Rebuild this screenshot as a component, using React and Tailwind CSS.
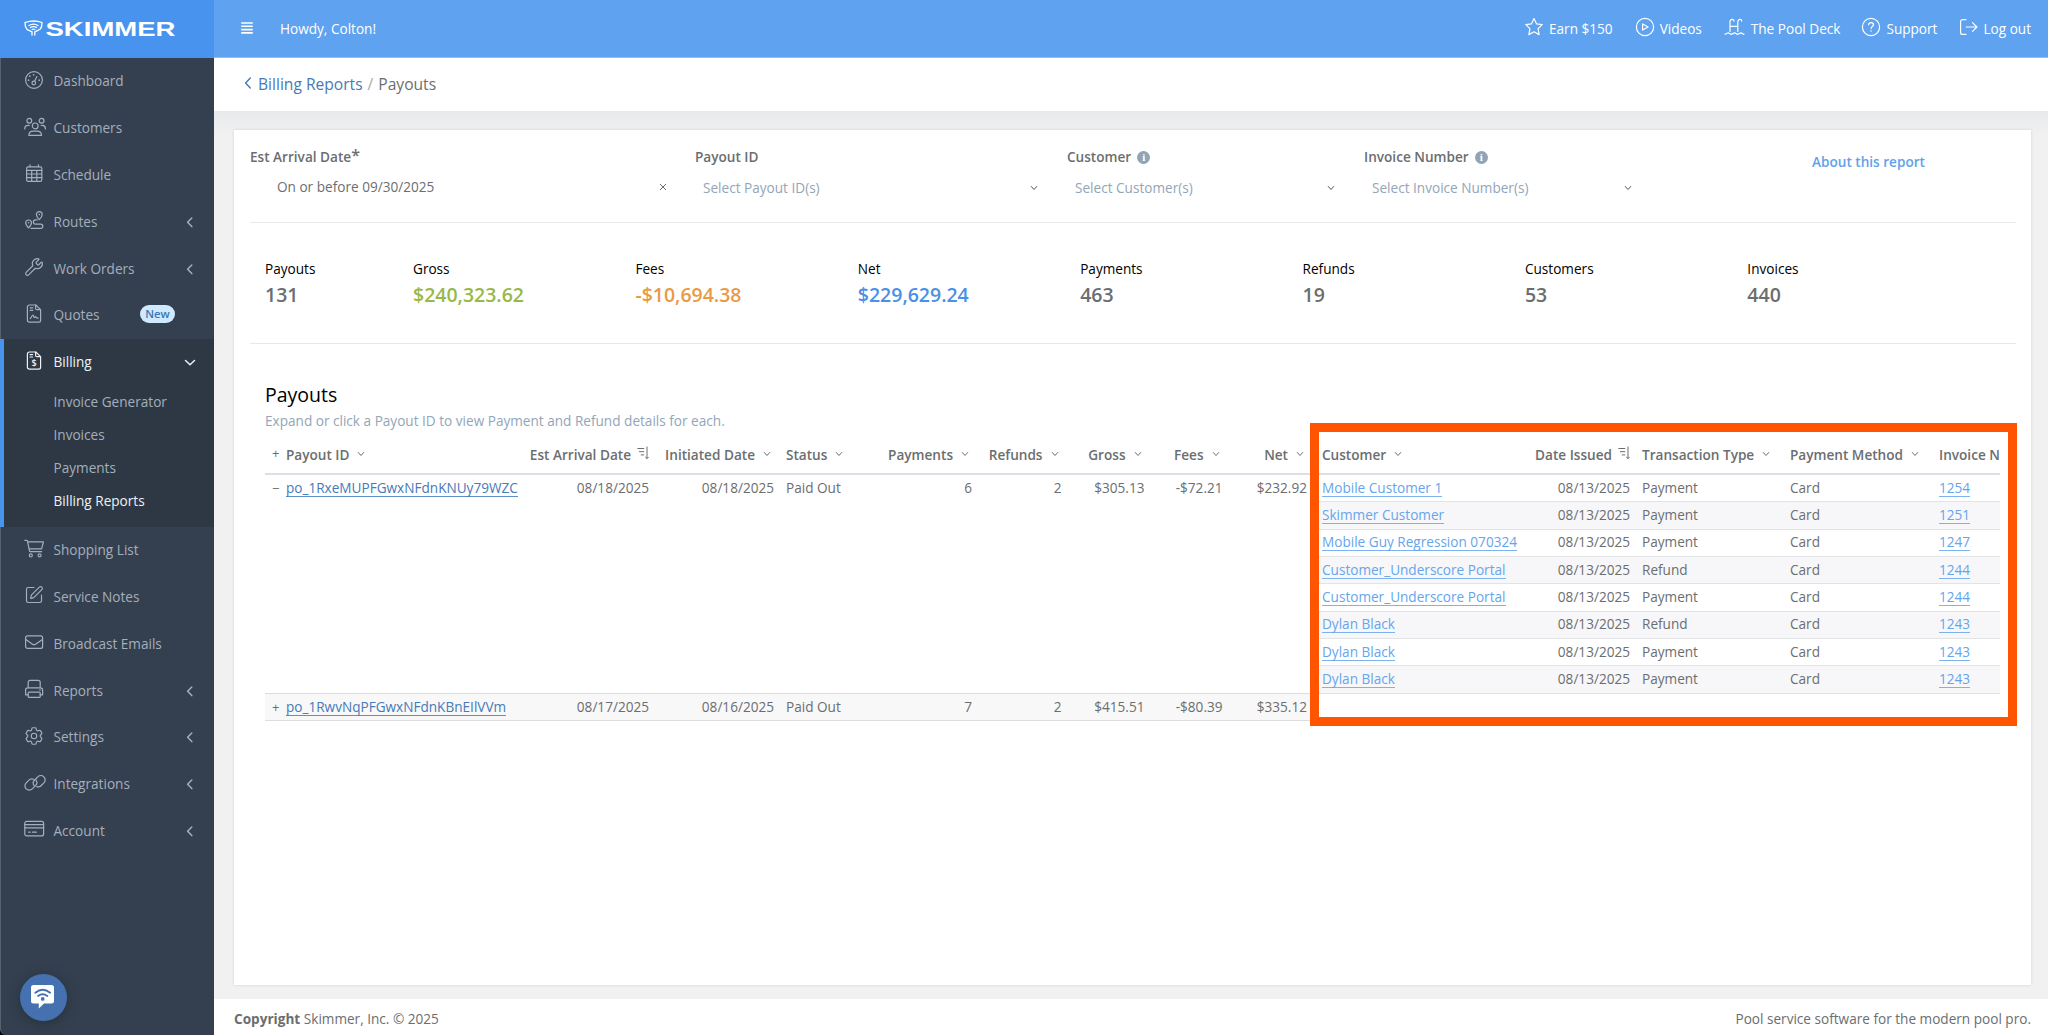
import clsx from 'clsx'
import { Wrench, SquarePen } from 'lucide-react'
import { HiOutlineCog6Tooth } from 'react-icons/hi2'

function Icon({ children, w = 22, h = 20, sw = 1.2, className }) {
  return (
    <svg
      width={w}
      height={h}
      viewBox={`0 0 ${w} ${h}`}
      fill="none"
      stroke="currentColor"
      strokeWidth={sw}
      strokeLinecap="round"
      strokeLinejoin="round"
      className={clsx('shrink-0', className)}
    >
      {children}
    </svg>
  )
}

const icons = {
  dashboard: (
    <Icon>
      <circle cx="10" cy="10" r="8.4" />
      <circle cx="9.8" cy="13" r="1.8" />
      <path d="M10.6 11.3l2.3-4.7" />
      <path d="M9.6 4.8v0M5.8 6.2v0M4.6 10.2v0M15.2 10.2v0" strokeWidth="1.7" />
    </Icon>
  ),
  customers: (
    <Icon>
      <circle cx="5.3" cy="3.8" r="2.4" />
      <circle cx="17.6" cy="3.8" r="2.4" />
      <circle cx="11.2" cy="8.9" r="2.9" />
      <path d="M4.9 18.4c0-2.6 1.8-4.3 4.2-4.3h4.2c2.4 0 4.2 1.7 4.2 4.3z" />
      <path d="M.8 12v-.6c0-1.9 1.4-3.1 3.2-3.1h1.2M21.4 12v-.6c0-1.9-1.2-3.1-3-3.1h-1.2" />
    </Icon>
  ),
  schedule: (
    <Icon>
      <rect x="2.6" y="3.9" width="15.2" height="14.4" rx="1.6" />
      <path d="M2.6 7.4h15.2M2.6 11h15.2M2.6 14.6h15.2M7.7 7.4v10.9M12.8 7.4v10.9M6 1.8v2M14.4 1.8v2" />
    </Icon>
  ),
  routes: (
    <Icon>
      <path d="M15.3 9.7c-1.8-2-2.9-3.6-2.9-5.2a2.9 2.9 0 0 1 5.8 0c0 1.6-1.1 3.2-2.9 5.2z" />
      <path d="M4.6 17.8c-1.8-2-2.9-3.4-2.9-4.9a2.9 2.9 0 0 1 5.8 0c0 1.5-1.1 2.9-2.9 4.9z" />
      <path d="M15.3 4.5v0M4.6 12.8v0" strokeWidth="1.6" />
      <path d="M13.2 9.9h-1.7a2.1 2.1 0 0 0 0 4.2h5.2a2.1 2.1 0 0 1 0 4.2H7" />
    </Icon>
  ),
  wrench: <Wrench size={20} strokeWidth={1.4} className="mr-0.5 shrink-0" />,
  quotes: (
    <Icon>
      <path d="M5.3 1h6.5l4.8 4.6v10.6a1.9 1.9 0 0 1-1.9 1.9H5.3a1.9 1.9 0 0 1-1.9-1.9V2.9A1.9 1.9 0 0 1 5.3 1z" />
      <path d="M11.6 1.2v3.2a1.2 1.2 0 0 0 1.2 1.2h3.6M6.2 3.8h2.6M6.2 6.4h2.6" />
      <path d="M6.2 14.6c1.4-1.2 1.8-3.6 2.8-3.6.9 0 .5 2.6 1.3 2.6.6 0 .7-.9 1.2-.9s.6 1.5 2.6 1.4" />
    </Icon>
  ),
  billing: (
    <Icon>
      <path d="M5.3 1h6.5l4.8 4.6v10.6a1.9 1.9 0 0 1-1.9 1.9H5.3a1.9 1.9 0 0 1-1.9-1.9V2.9A1.9 1.9 0 0 1 5.3 1z" />
      <path d="M11.6 1.2v3.2a1.2 1.2 0 0 0 1.2 1.2h3.6M6 3.6h2.6M6 6h2.6" />
      <text x="10.1" y="15.4" textAnchor="middle" fontSize="9" fontWeight="600" fontFamily="Open Sans" fill="currentColor" stroke="none">
        $
      </text>
    </Icon>
  ),
  cart: (
    <Icon>
      <path d="M.8 1.3h1.7c.6 0 .9.3 1 .8l2 9.7c.1.6.5.9 1.1.9h11M3.7 2.9h15.7l-1.8 6.9H5.2" />
      <circle cx="6.8" cy="16.4" r="1.5" />
      <circle cx="15.6" cy="16.4" r="1.5" />
    </Icon>
  ),
  edit: <SquarePen size={20} strokeWidth={1.4} className="mr-0.5 shrink-0" />,
  mail: (
    <Icon>
      <rect x="1.6" y="3.8" width="17" height="12.6" rx="2" />
      <path d="M1.8 7.4l6.7 4.8a2.6 2.6 0 0 0 3.1 0l6.8-4.8" />
    </Icon>
  ),
  printer: (
    <Icon>
      <path d="M4.2 8V3.2A1.9 1.9 0 0 1 6.1 1.3h8.1a2 2 0 0 1 2 2V8" />
      <path d="M4.2 15.8H1.6v-4.9A2.1 2.1 0 0 1 3.7 8.8h12.8a2.1 2.1 0 0 1 2.1 2.1v4.9h-2.5" />
      <rect x="4.2" y="13.1" width="12" height="5.3" rx="1" />
      <path d="M16 11v0" strokeWidth="1.6" />
    </Icon>
  ),
  settings: <HiOutlineCog6Tooth size={22} strokeWidth={1.25} className="-ml-px mr-px shrink-0" />,
  link: (
    <Icon>
      <path d="M9.6 6.2a4.6 4.6 0 0 0-4.9 1.1L2.2 9.8a4.3 4.3 0 0 0 6.1 6.1l3.2-3.2a4.3 4.3 0 0 0 .3-5.8" />
      <path d="M12.6 13.7a4.6 4.6 0 0 0 4.7-1.2l2.6-2.6a4.3 4.3 0 0 0-6.1-6.1l-3.2 3.2a4.3 4.3 0 0 0-.3 5.8" />
    </Icon>
  ),
  card: (
    <Icon>
      <rect x=".8" y="2.3" width="18.8" height="14.6" rx="2" />
      <path d="M.8 5.6h18.8M.8 8.8h18.8M4.6 13.2h1.6M8.4 13.2h4" />
    </Icon>
  ),
}

const topMenu = [
  { label: 'Dashboard', icon: 'dashboard' },
  { label: 'Customers', icon: 'customers' },
  { label: 'Schedule', icon: 'schedule' },
  { label: 'Routes', icon: 'routes', arrow: true },
  { label: 'Work Orders', icon: 'wrench', arrow: true },
  { label: 'Quotes', icon: 'quotes', badge: 'New' },
]

const billingMenu = ['Invoice Generator', 'Invoices', 'Payments', 'Billing Reports']

const bottomMenu = [
  { label: 'Shopping List', icon: 'cart' },
  { label: 'Service Notes', icon: 'edit' },
  { label: 'Broadcast Emails', icon: 'mail' },
  { label: 'Reports', icon: 'printer', arrow: true },
  { label: 'Settings', icon: 'settings', arrow: true },
  { label: 'Integrations', icon: 'link', arrow: true },
  { label: 'Account', icon: 'card', arrow: true },
]

const headerLinks = [
  {
    label: 'Earn $150',
    gap: 'mr-[22px]',
    icon: (
      <Icon w={20} h={20}>
        <path d="M10 1.5l2.5 5.3 5.7.8-4.1 4.1 1 5.9-5.1-2.8-5.1 2.8 1-5.9L1.8 7.6l5.700-.8z" />
      </Icon>
    ),
  },
  {
    label: 'Videos',
    gap: 'mr-[22px]',
    icon: (
      <Icon w={20} h={20}>
        <circle cx="10" cy="10" r="8.6" />
        <path d="M7.6 6.9v6.2l5.5-3.1z" />
      </Icon>
    ),
  },
  {
    label: 'The Pool Deck',
    gap: 'mr-[21px]',
    icon: (
      <Icon w={21} h={20} className="mr-px">
        <path d="M6 14.5V5.2c0-1.7.9-2.8 2.2-2.8 1.1 0 1.7.7 1.8 1.7M13.8 14.5V5.2c0-1.7.9-2.8 2.2-2.8 1.1 0 1.7.7 1.8 1.7M6 9.3h7.8" />
        <path d="M1 17.2c1.7 0 1.9-1.4 3.1-1.4 1.4 0 1.6 1.4 3.2 1.4s1.8-1.4 3.2-1.4 1.6 1.4 3.2 1.4 1.8-1.4 3.2-1.4c1.3 0 1.5 1.4 3.1 1.4" />
      </Icon>
    ),
  },
  {
    label: 'Support',
    gap: 'mr-[21px]',
    icon: (
      <Icon w={20} h={20}>
        <circle cx="10" cy="10" r="8.6" />
        <path d="M7.6 7.7c.1-1.3 1-2.1 2.4-2.1s2.5.8 2.5 2.1c0 1.8-2.4 1.8-2.4 3.7" />
        <path d="M10.1 14v0" strokeWidth="1.6" />
      </Icon>
    ),
  },
  {
    label: 'Log out',
    gap: '',
    icon: (
      <Icon w={20} h={20} className="-mr-px ml-px">
        <path d="M7 2.6H3.6a2 2 0 0 0-2 2v10.8a2 2 0 0 0 2 2H7M7.2 10h10.6M13.5 5.6l4.4 4.400-4.400 4.400" />
      </Icon>
    ),
  },
]

const stats = [
  { label: 'Payouts', value: '131', color: 'text-[#6b6e70]' },
  { label: 'Gross', value: '$240,323.62', color: 'text-[#98b849]' },
  { label: 'Fees', value: '-$10,694.38', color: 'text-[#ea9a45]' },
  { label: 'Net', value: '$229,629.24', color: 'text-[#4a90e8]' },
  { label: 'Payments', value: '463', color: 'text-[#6b6e70]' },
  { label: 'Refunds', value: '19', color: 'text-[#6b6e70]' },
  { label: 'Customers', value: '53', color: 'text-[#6b6e70]' },
  { label: 'Invoices', value: '440', color: 'text-[#6b6e70]' },
]

const details = [
  ['Mobile Customer 1', 'Payment', '1254'],
  ['Skimmer Customer', 'Payment', '1251'],
  ['Mobile Guy Regression 070324', 'Payment', '1247'],
  ['Customer_Underscore Portal', 'Refund', '1244'],
  ['Customer_Underscore Portal', 'Payment', '1244'],
  ['Dylan Black', 'Refund', '1243'],
  ['Dylan Black', 'Payment', '1243'],
  ['Dylan Black', 'Payment', '1243'],
]

const payoutCols = 'grid grid-cols-[257px_133px_125px_102px_96px_89.5px_83px_78px_84.5px]'
const detailCols = 'grid grid-cols-[212px_108px_148px_149px_67px]'

function Chevron({ className }) {
  return (
    <Icon w={8} h={6} sw={1} className={className}>
      <path d="M1.3 1.5L4 4.5l2.7-3" />
    </Icon>
  )
}

function SortIcon() {
  return (
    <Icon w={12} h={14} sw={1} className="ml-[6px] mb-1">
      <path d="M.8 2.5h6M2.4 5.7h4.4M4.2 8.9h2.6M10 1v11.4M8.6 11.2l1.4 1.4 1.4-1.4" />
    </Icon>
  )
}

function Head({ label, right, sorted, plain }) {
  return (
    <div className={clsx('flex items-center px-[6px] whitespace-nowrap font-semibold', right && 'justify-end')}>
      {label}
      {sorted && <SortIcon />}
      {!sorted && !plain && <Chevron className={clsx('ml-2 mb-0.5', right && 'mr-[3px]')} />}
    </div>
  )
}

function InfoDot() {
  return (
    <span className="ml-[6px] flex size-[13px] items-center justify-center rounded-full bg-[#91a4b7] font-['Liberation_Serif',serif] text-[11px] font-bold leading-none text-white">
      i
    </span>
  )
}

function MenuRow({ item, active }) {
  return (
    <div className="flex h-[46.8px] items-center pl-6 pr-[18px]">
      <span className="-mt-[3px]">{icons[item.icon]}</span>
      <span className="ml-[7.5px]">{item.label}</span>
      {item.badge && (
        <span className="-mt-0.5 ml-[40.5px] flex h-[18px] w-[35px] items-center justify-center rounded-full bg-[#cfeafd] text-[11.3px] font-semibold text-[#3f76b5]">
          {item.badge}
        </span>
      )}
      {item.arrow && (
        <Icon w={12} h={12} sw={1.5} className="ml-auto">
          <path d="M7.8 2L3.6 6.3l4.2 4.3" />
        </Icon>
      )}
      {active && (
        <Icon w={12} h={12} sw={1.5} className="ml-auto">
          <path d="M1.5 4.5L6 8.8l4.5-4.3" />
        </Icon>
      )}
    </div>
  )
}

function Sidebar() {
  return (
    <aside className="relative flex w-[214px] shrink-0 flex-col rounded-bl-[6px] border-l border-[#56626f] bg-[#344050] text-[#a4afbb]">
      <div className="-ml-px flex h-[58px] shrink-0 items-center bg-[#4893ed] pl-6">
        <svg width="154" height="20" viewBox="0 0 154 20" fill="none" stroke="#fff" strokeLinecap="round">
          <path d="M1 3.5Q10 .5 18 3.5L17.600 7.5Q16.8 10.5 13.3 11.7L10.8 13v3M1 3.5l.4 4Q2.2 10.5 5.5 11.7L8 13v3" strokeWidth="1.3" />
          <path d="M5 6.6Q9.5 3.7 14 6.6M6.4 8.6Q9.5 6.5 12.6 8.6M8.2 10.5Q9.5 9.8 10.8 10.5" strokeWidth="1.2" />
          <text
            x="21.5"
            y="17"
            fill="#fff"
            stroke="none"
            fontFamily="Liberation Sans, sans-serif"
            fontWeight="700"
            fontSize="19.5"
            textLength="130"
            lengthAdjust="spacingAndGlyphs"
          >
            SKIMMER
          </text>
        </svg>
      </div>
      <nav className="-ml-px">
        {topMenu.map((m) => (
          <MenuRow key={m.label} item={m} />
        ))}
        <div className="h-[188px] border-l-4 border-[#4893ed] bg-[#2d3844]">
          <div className="-ml-1 text-[#eef1f4]">
            <MenuRow item={{ label: 'Billing', icon: 'billing' }} active />
          </div>
          {billingMenu.map((label) => (
            <div
              key={label}
              className={clsx('flex h-[33px] items-center pl-[49.5px]', label === 'Billing Reports' && 'text-[#eef1f4]')}
            >
              {label}
            </div>
          ))}
        </div>
        {bottomMenu.map((m) => (
          <MenuRow key={m.label} item={m} />
        ))}
      </nav>
      <button className="absolute bottom-[14.5px] left-[18.5px] flex size-[47px] items-center justify-center rounded-full bg-[#4671b1] shadow-[0_2px_14px_rgba(0,0,0,0.25)]">
        <svg width="26" height="26" viewBox="0 0 26 26" fill="none">
          <path d="M3.5 1h18a2.5 2.5 0 0 1 2.5 2.5v13.5a2.5 2.5 0 0 1-2.5 2.5H14L8.8 24.500V19.5H3.5A2.5 2.5 0 0 1 1 17V3.5A2.5 2.5 0 0 1 3.5 1z" fill="#fff" />
          <path d="M5.3 8.7Q12.7 3 20.1 8.7M8.1 12Q12.7 8.6 17.3 12" stroke="#4671b1" strokeWidth="1.9" strokeLinecap="round" />
          <circle cx="12.7" cy="14.9" r="1.9" fill="#4671b1" />
        </svg>
      </button>
    </aside>
  )
}

function Header() {
  return (
    <header className="flex h-[58px] shrink-0 items-center border-b border-[#8fbdf3] bg-[#5fa2ef] pl-[27px] pr-[17px] text-white">
      <Icon w={12} h={12} sw={1.6} className="-mt-0.5">
        <path d="M.8 1h10.4M.8 4.300h10.4M.8 7.600h10.4M.8 10.900h10.4" />
      </Icon>
      <span className="ml-[27px] mt-px">Howdy, Colton!</span>
      <div className="ml-auto flex items-center">
        {headerLinks.map((l) => (
          <a key={l.label} className={clsx('flex items-center', l.gap)}>
            <span className="-mt-[3px]">{l.icon}</span>
            <span className="ml-[5px] mt-px">{l.label}</span>
          </a>
        ))}
      </div>
    </header>
  )
}

function Filter({ label, placeholder, info, className }) {
  return (
    <div className={className}>
      <div className="flex h-5 items-center font-semibold">
        {label}
        {info && <InfoDot />}
      </div>
      <div className="mt-[11px] flex h-5 items-center pl-2 text-[#93a5b8]">
        {placeholder}
        <Chevron className="ml-auto mr-[29px] text-[#555]" />
      </div>
    </div>
  )
}

function Filters() {
  return (
    <div className="flex h-[93px] border-b border-[#e7e8ea] pt-[17px]">
      <div className="w-[445px]">
        <div className="flex h-5 items-center font-semibold">
          Est Arrival Date<span className="-mt-1 text-[16px]">*</span>
        </div>
        <div className="mt-2.5 flex h-5 items-center pl-[27px]">
          On or before 09/30/2025
          <Icon w={8} h={8} sw={1} className="ml-auto mr-7">
            <path d="M1.2 1.2l5.6 5.6M6.8 1.2L1.2 6.8" />
          </Icon>
        </div>
      </div>
      <Filter label="Payout ID" placeholder="Select Payout ID(s)" className="w-[372px]" />
      <Filter label="Customer" placeholder="Select Customer(s)" info className="w-[297px]" />
      <Filter label="Invoice Number" placeholder="Select Invoice Number(s)" info className="w-[297px]" />
      <a className="ml-[151px] mt-[5px] h-5 font-semibold text-[#62a1ea]">About this report</a>
    </div>
  )
}

function Stats() {
  return (
    <div className="flex h-[121px] border-b border-[#e7e8ea] pl-[15px] pt-9">
      {stats.map((s, i) => (
        <div key={s.label} className={i === 0 ? 'w-[148px]' : 'w-[222.4px]'}>
          <div className="h-5 leading-5 text-black">{s.label}</div>
          <div className={clsx('mt-0.5 h-7 text-[19.5px] leading-7 font-semibold', s.color)}>{s.value}</div>
        </div>
      ))}
    </div>
  )
}

function PayoutRow({ toggle, id, arrival, initiated, payments, refunds, gross, fees, net }) {
  return (
    <div className={clsx(payoutCols, 'h-[25px] items-center whitespace-nowrap')}>
      <div className="flex items-center pl-[7px]">
        <span className="w-[14px] text-[13px]">{toggle}</span>
        <a className="border-b border-[#5f8fc6] leading-[17px] text-[#477ab8]">{id}</a>
      </div>
      <div className="px-[6px] text-right">{arrival}</div>
      <div className="px-[6px] text-right">{initiated}</div>
      <div className="px-[6px]">Paid Out</div>
      {[payments, refunds, gross, fees, net].map((v, i) => (
        <div key={i} className="pr-[6px] text-right">
          {v}
        </div>
      ))}
    </div>
  )
}

function PayoutsTable() {
  return (
    <div className="relative ml-[15px] mr-[15px] mt-1.5 flex">
      <div className="w-[1048px] shrink-0">
        <div className={clsx(payoutCols, 'h-[38px] border-b-2 border-[#dddfe8] pb-px')}>
          <div className="flex items-center pl-[7px] font-semibold">
            <span className="mb-1 w-[14px] text-[13px] font-normal">+</span>
            Payout ID
            <Chevron className="ml-2 mb-0.5" />
          </div>
          <Head label="Est Arrival Date" right sorted />
          <Head label="Initiated Date" right />
          <Head label="Status" />
          <Head label="Payments" right />
          <Head label="Refunds" right />
          <Head label="Gross" right />
          <Head label="Fees" right />
          <Head label="Net" right />
        </div>
        <div className="h-[218px]">
          <PayoutRow
            toggle="−"
            id="po_1RxeMUPFGwxNFdnKNUy79WZC"
            arrival="08/18/2025"
            initiated="08/18/2025"
            payments="6"
            refunds="2"
            gross="$305.13"
            fees="-$72.21"
            net="$232.92"
          />
        </div>
        <div className="border-y border-[#dcdde0] bg-[#f8f8f9] pb-px">
          <PayoutRow
            toggle="+"
            id="po_1RwvNqPFGwxNFdnKBnEIlVVm"
            arrival="08/17/2025"
            initiated="08/16/2025"
            payments="7"
            refunds="2"
            gross="$415.51"
            fees="-$80.39"
            net="$335.12"
          />
        </div>
      </div>
      <div className="w-[687px] overflow-hidden pl-[3px]">
        <div className={clsx(detailCols, 'h-[38px] border-b-2 border-[#dddfe8] pb-px')}>
          <Head label="Customer" />
          <Head label="Date Issued" right sorted />
          <Head label="Transaction Type" />
          <Head label="Payment Method" />
          <Head label="Invoice N" plain />
        </div>
        {details.map(([customer, type, invoice], i) => (
          <div
            key={i}
            className={clsx(
              detailCols,
              'h-[27.35px] items-center whitespace-nowrap border-b border-[#e2e3e5] pb-px',
              i % 2 === 1 && 'bg-[#f7f7f9]'
            )}
          >
            <div className="px-[6px]">
              <a className="inline-block border-b border-[#7db2ee] leading-[17px] text-[#66a5ec]">{customer}</a>
            </div>
            <div className="px-[6px] text-right">08/13/2025</div>
            <div className="px-[6px]">{type}</div>
            <div className="px-[6px]">Card</div>
            <div className="px-[6px]">
              <a className="inline-block border-b border-[#7db2ee] leading-[17px] text-[#66a5ec]">{invoice}</a>
            </div>
          </div>
        ))}
      </div>
      {/* highlight frame over the transaction details */}
      <div className="pointer-events-none absolute -right-4 -top-[14px] h-[303px] w-[707px] border-[9px] border-[#ff5500]" />
    </div>
  )
}

export default function App() {
  return (
    <div className="flex h-[1035px] w-full overflow-hidden bg-black font-['Open_Sans',sans-serif] text-[13.6px] leading-5 text-[#6b6e70]">
      <Sidebar />
      <div className="flex min-w-0 flex-1 flex-col bg-[#f1f1f2]">
        <Header />
        <div className="flex h-[53px] shrink-0 items-center bg-white pb-px pl-[30px] text-[15.6px]">
          <Icon w={8} h={14} sw={1.4} className="-mt-0.5 text-[#477ab8]">
            <path d="M6.3 2L1.6 7l4.7 5" />
          </Icon>
          <a className="ml-[6px] text-[#477ab8]">Billing Reports</a>
          <span className="mx-[5px] text-[#a9abad]">/</span>
          <span>Payouts</span>
        </div>
        <main className="flex-1 bg-linear-to-b from-[#e8e9eb] to-[#f1f1f2] to-[24px] pl-5 pr-[17px] pt-[19px]">
          <div className="h-[855px] bg-white pl-4 pr-[15px] shadow-[0_0_3px_rgba(0,0,0,0.12)]">
            <Filters />
            <Stats />
            <h2 className="ml-[15px] mt-[37px] h-7 text-[19.5px] leading-7 text-black">Payouts</h2>
            <p className="ml-[15px] mt-0.5 text-[#93a5b8]">Expand or click a Payout ID to view Payment and Refund details for each.</p>
            <PayoutsTable />
          </div>
        </main>
        <footer className="flex h-9 shrink-0 items-center justify-between bg-white pb-px pl-5 pr-[17px] pt-1">
          <span>
            <b>Copyright</b> Skimmer, Inc. © 2025
          </span>
          <span>Pool service software for the modern pool pro.</span>
        </footer>
      </div>
    </div>
  )
}
